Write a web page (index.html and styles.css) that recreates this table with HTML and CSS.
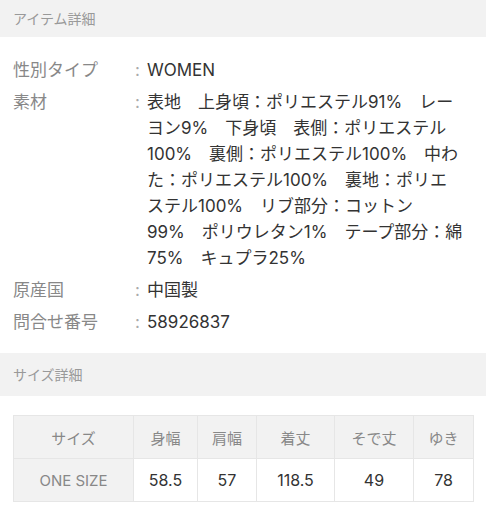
FILE: index.html
```html
<!DOCTYPE html>
<html lang="ja">
  <head>
    <meta charset="UTF-8" />
    <meta name="viewport" content="width=device-width, initial-scale=1.0" />
    <title>アイテム詳細</title>
    <link rel="stylesheet" href="styles.css">
  </head>
  <body>
    <main class="detail">
      <h2 class="detail__head detail__head--top">アイテム詳細</h2>
      <dl class="spec">
        <div class="spec__row">
          <dt class="spec__label">性別タイプ</dt>
          <dd class="spec__value">WOMEN</dd>
        </div>
        <div class="spec__row">
          <dt class="spec__label">素材</dt>
          <dd class="spec__value spec__value--long">表地　上身頃：ポリエステル91%　レー<br>ヨン9%　下身頃　表側：ポリエステル<br>100%　裏側：ポリエステル100%　中わ<br>た：ポリエステル100%　裏地：ポリエ<br>ステル100%　リブ部分：コットン<br>99%　ポリウレタン1%　テープ部分：綿<br>75%　キュプラ25%</dd>
        </div>
        <div class="spec__row">
          <dt class="spec__label">原産国</dt>
          <dd class="spec__value">中国製</dd>
        </div>
        <div class="spec__row">
          <dt class="spec__label">問合せ番号</dt>
          <dd class="spec__value">58926837</dd>
        </div>
      </dl>

      <h2 class="detail__head">サイズ詳細</h2>
      <div class="size-wrap">
        <table class="size">
          <colgroup>
            <col class="size__col-name" />
            <col style="width: 64px" />
            <col style="width: 59px" />
            <col style="width: 78px" />
            <col style="width: 79px" />
            <col style="width: 60px" />
          </colgroup>
          <thead>
            <tr>
              <th>サイズ</th>
              <th>身幅</th>
              <th>肩幅</th>
              <th>着丈</th>
              <th>そで丈</th>
              <th>ゆき</th>
            </tr>
          </thead>
          <tbody>
            <tr>
              <th>ONE SIZE</th>
              <td>58.5</td>
              <td>57</td>
              <td>118.5</td>
              <td>49</td>
              <td>78</td>
            </tr>
          </tbody>
        </table>
      </div>
    </main>
  </body>
</html>
```

FILE: styles.css
```css
* {
  margin: 0;
  padding: 0;
  box-sizing: border-box;
}

body {
  font-family: Inter, "Noto Sans CJK JP", sans-serif;
  color: #333;
  background-color: #fff;
}

.detail {
  width: 486px;
}

.detail__head {
  height: 43px;
  line-height: 43px;
  padding-left: 13px;
  font-size: 14px;
  font-weight: 400;
  color: #999;
  background-color: #f2f2f2;
}

.detail__head--top {
  height: 37px;
  line-height: 37px;
}

.spec {
  padding: 20px 10px 18px 13px;
  display: flex;
  flex-direction: column;
  gap: 6px;
}

.spec__row {
  display: grid;
  grid-template-columns: 122px 1fr;
  font-size: 17px;
  line-height: 26px;
}

.spec__label {
  color: #888;
}

.spec__value {
  position: relative;
  padding-left: 12px;
}

.spec__value--long {
  white-space: nowrap;
}

/* gray half-width colon before each value */
.spec__value::before {
  content: ":";
  position: absolute;
  left: 0;
  top: 0;
  color: #aaa;
}

.size-wrap {
  padding: 19px 13px 0 13px;
}

.size {
  width: 460px;
  table-layout: fixed;
  border-collapse: collapse;
  text-align: center;
}

.size__col-name {
  width: 120px;
}

.size th,
.size td {
  border: 1px solid #e6e6e6;
  font-weight: 400;
}

.size thead th {
  height: 43px;
  font-size: 15px;
  color: #888;
  background-color: #f2f2f2;
}

.size tbody th {
  height: 43px;
  font-size: 15px;
  color: #888;
  background-color: #f2f2f2;
}

.size td {
  font-size: 16px;
  color: #333;
  background-color: #fff;
}
```
